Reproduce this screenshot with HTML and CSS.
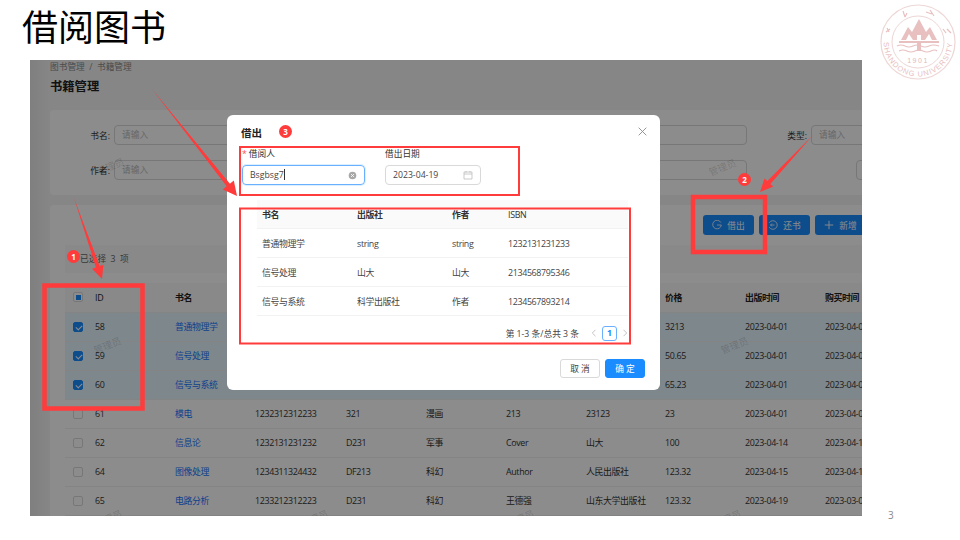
FILE: index.html
```html
<!DOCTYPE html>
<html>
<head>
    <meta charset="utf-8">
    <title>借阅图书</title>
    <link rel="stylesheet" href="styles.css">
</head>
<body>
<div class="slide">
    <div class="slideHead">
        <h1>借阅图书</h1>
    </div>
    <svg class="logo" width="80" height="80" viewBox="0 0 80 80">
        <defs>
            <path id="logoArc" d="M3.500 40 A34.500 34.500 0 0 0 72.500 40"/>
        </defs>
        <circle cx="38" cy="40" r="37" fill="none" stroke="#eed6d6" stroke-width="1.200"/>
        <circle cx="38" cy="40" r="26" fill="none" stroke="#eed6d6" stroke-width="1"/>
        <path d="M21 38 L28 25 L32 30 L39 17 L46 30 L50 25 L57 38 L52 38 L49 32 L45 38 L41 38 L41 33 L37 33 L37 38 L33 38 L29 32 L26 38 Z" fill="#e8c0c0"/>
        <path d="M19 39 H59 V41 H19 Z M37 39 H41 V49 H37 Z" fill="#e8c0c0"/>
        <path d="M17 44 Q21 42 25 44 T33 44 T41 44 T49 44 T59 44 M19 49 Q23 47 27 49 T35 49 T43 49 T51 49 T57 49" fill="none" stroke="#e8c0c0" stroke-width="1.100"/>
        <text x="38" y="61" class="logoYear" text-anchor="middle">1901</text>
        <text class="logoName"><textPath href="#logoArc" startOffset="50%" text-anchor="middle">SHANDONG UNIVERSITY</textPath></text>
        <path d="M6 30 L10 27 M7 26 L9 30 M23 9 L25 15 M27 11 L25 15 M46 10 L52 12 M50 8 L54 14 M63 27 L66 31 M67 27 L71 31" stroke="#e8c0c0" stroke-width="1.200" fill="none"/>
    </svg>

    <div class="shot">
        <div class="crumb">图书管理&nbsp; /&nbsp; 书籍管理</div>
        <div class="pageTitle">书籍管理</div>

        <div class="card searchCard">
            <div class="searchRow">
                <label class="searchLabel">书名:</label>
                <span class="searchInput">请输入</span>
                <span class="searchInput gapA">请输入</span>
                <label class="searchLabel labelType">类型:</label>
                <span class="searchInput">请输入</span>
            </div>
            <div class="searchRow">
                <label class="searchLabel">作者:</label>
                <span class="searchInput">请输入</span>
                <span class="searchInput gapA">请输入</span>
                <span class="searchInput gapB">请输入</span>
            </div>
        </div>

        <div class="card tableCard">
            <div class="toolbar">
                <button class="primaryBtn">
                    <svg width="10" height="10" viewBox="0 0 10 10"><path d="M8.800 2.500 A4.300 4.300 0 1 0 9.300 5 H5" fill="none" stroke="currentColor" stroke-width=".8"/></svg>
                    借出
                </button>
                <button class="primaryBtn">
                    <svg width="10" height="10" viewBox="0 0 10 10"><path d="M1.200 2.800 A4.300 4.300 0 1 1 1.200 7.200 M6.500 5 H2.500 M4 3.500 L2.500 5 L4 6.500" fill="none" stroke="currentColor" stroke-width=".8"/></svg>
                    还书
                </button>
                <button class="primaryBtn">
                    <svg width="10" height="10" viewBox="0 0 10 10"><path d="M5 .8 V9.200 M.8 5 H9.200" fill="none" stroke="currentColor" stroke-width=".9"/></svg>
                    新增
                </button>
            </div>
            <div class="alertBar">已选择&nbsp; 3&nbsp; 项</div>
            <table class="bookTable">
                <colgroup>
                    <col class="colCheck"><col class="colW"><col class="colW"><col class="colIsbn"><col class="colW"><col class="colW"><col class="colW"><col class="colPrice"><col class="colW"><col class="colW"><col class="colW">
                </colgroup>
                <thead>
                    <tr><th><i class="check half"></i></th><th class="latin">ID</th><th>书名</th><th class="latin">ISBN</th><th>编号</th><th>类型</th><th>作者</th><th>出版社</th><th>价格</th><th>出版时间</th><th>购买时间</th></tr>
                </thead>
                <tbody>
                    <tr class="selected"><td><i class="check on"></i></td><td>58</td><td><a>普通物理学</a></td><td>1232131231233</td><td>string</td><td>科幻</td><td>string</td><td>string</td><td>3213</td><td>2023-04-01</td><td>2023-04-01</td></tr>
                    <tr class="selected"><td><i class="check on"></i></td><td>59</td><td><a>信号处理</a></td><td>2134568795346</td><td>山大</td><td>科幻</td><td>山大</td><td>山大</td><td>50.65</td><td>2023-04-01</td><td>2023-04-01</td></tr>
                    <tr class="selected"><td><i class="check on"></i></td><td>60</td><td><a>信号与系统</a></td><td>1234567893214</td><td>科学</td><td>科幻</td><td>作者</td><td>科学出版社</td><td>65.23</td><td>2023-04-01</td><td>2023-04-01</td></tr>
                    <tr><td><i class="check"></i></td><td>61</td><td><a>模电</a></td><td>1232312312233</td><td>321</td><td>漫画</td><td>213</td><td>23123</td><td>23</td><td>2023-04-01</td><td>2023-04-01</td></tr>
                    <tr><td><i class="check"></i></td><td>62</td><td><a>信息论</a></td><td>1232131231232</td><td>D231</td><td>军事</td><td>Cover</td><td>山大</td><td>100</td><td>2023-04-14</td><td>2023-04-14</td></tr>
                    <tr><td><i class="check"></i></td><td>64</td><td><a>图像处理</a></td><td>1234311324432</td><td>DF213</td><td>科幻</td><td>Author</td><td>人民出版社</td><td>123.32</td><td>2023-04-15</td><td>2023-04-15</td></tr>
                    <tr><td><i class="check"></i></td><td>65</td><td><a>电路分析</a></td><td>1233212312223</td><td>D231</td><td>科幻</td><td>王德强</td><td>山东大学出版社</td><td>123.32</td><td>2023-04-19</td><td>2023-03-01</td></tr>
                </tbody>
            </table>
        </div>

        <span class="mark mark1">管理员</span>
        <span class="mark mark3">管理员</span>
        <span class="mark mark4">管理员</span>
        <span class="mark mark5">管理员</span>
        <span class="mark mark6">管理员</span>
        <span class="mark mark7">管理员</span>
        <span class="mark mark8">管理员</span>
        <span class="mark mark9">管理员</span>

        <div class="mask"></div>

        <div class="modal">
            <div class="modalTitle">借出</div>
            <svg class="modalClose" width="9" height="9" viewBox="0 0 9 9"><path d="M.7 .7 L8.300 8.300 M8.300 .7 L.7 8.300" stroke="#8a8a8a" stroke-width=".9"/></svg>
            <div class="modalForm">
                <div class="field fieldName">
                    <div class="fieldLabel"><em>*</em>借阅人</div>
                    <div class="fieldBox focus">
                        <span>Bsgbsg7<b class="caret"></b></span>
                        <svg width="9" height="9" viewBox="0 0 9 9"><circle cx="4.500" cy="4.500" r="3.800" fill="#a8a8a8"/><path d="M3 3 L6 6 M6 3 L3 6" stroke="#fff" stroke-width=".8"/></svg>
                    </div>
                </div>
                <div class="field fieldDate">
                    <div class="fieldLabel">借出日期</div>
                    <div class="fieldBox">
                        <span>2023-04-19</span>
                        <svg width="10" height="10" viewBox="0 0 10 10"><path d="M1 2 H9 V9 H1 Z M1 4 H9 M3 1 V2.500 M7 1 V2.500" fill="none" stroke="#b5b5b5" stroke-width=".7"/></svg>
                    </div>
                </div>
            </div>
            <table class="pickTable">
                <colgroup>
                    <col class="pickName"><col class="pickName"><col class="pickAuthor"><col>
                </colgroup>
                <thead>
                    <tr><th>书名</th><th>出版社</th><th>作者</th><th class="latin">ISBN</th></tr>
                </thead>
                <tbody>
                    <tr><td>普通物理学</td><td>string</td><td>string</td><td>1232131231233</td></tr>
                    <tr><td>信号处理</td><td>山大</td><td>山大</td><td>2134568795346</td></tr>
                    <tr><td>信号与系统</td><td>科学出版社</td><td>作者</td><td>1234567893214</td></tr>
                </tbody>
            </table>
            <div class="pager">
                <span class="pagerTotal">第 1-3 条/总共 3 条</span>
                <svg width="6" height="8" viewBox="0 0 6 8"><path d="M4.500 .8 L1.300 4 L4.500 7.200" fill="none" stroke="#c4c4c4"/></svg>
                <span class="pagerCur">1</span>
                <svg width="6" height="8" viewBox="0 0 6 8"><path d="M1.500 .8 L4.700 4 L1.500 7.200" fill="none" stroke="#c4c4c4"/></svg>
            </div>
            <div class="modalFoot">
                <button class="footBtn">取 消</button>
                <button class="footBtn ok">确 定</button>
            </div>
        </div>
    </div>

    <svg class="notes" width="960" height="540" viewBox="0 0 960 540">
        <g fill="none" stroke="#ff3b3b">
            <rect x="240" y="147" width="279" height="48" stroke-width="2"/>
            <rect x="240" y="208.500" width="390" height="135" stroke-width="2"/>
            <rect x="44.500" y="285.500" width="98" height="123" stroke-width="4.500"/>
            <rect x="693" y="197" width="72" height="55" stroke-width="4.500"/>
        </g>
        <g fill="#ff3b3b">
            <polygon points="74,198 99.600,266 103.400,264.700 102,279 92.100,268.700 95.900,267.400"/>
            <polygon points="152,89 229.900,183.800 233.800,180.600 237,196 222.800,189.400 226.700,186.200"/>
            <polygon points="813,135 770.400,183.900 773.300,186.600 760,192 764.500,178.400 767.400,181.100"/>
        </g>
    </svg>
    <span class="badge badge1">1</span>
    <span class="badge badge2">2</span>
    <span class="badge badge3">3</span>

    <span class="pageNo">3</span>
</div>
</body>
</html>
```

FILE: styles.css
```css
*{
    box-sizing: border-box;
}
body{
    margin: 0;
    background: #fff;
    font-family: "Open Sans", "Noto Sans CJK SC", sans-serif;
}
.slide{
    width: 960px;
    height: 540px;
    position: relative;
    overflow: hidden;
}
.slideHead{
    height: 60px;
    padding-left: 22px;
}
.slideHead h1{
    margin: 0;
    font-family: "Noto Sans CJK SC", sans-serif;
    font-size: 36px;
    font-weight: 400;
    line-height: 50px;
    color: #000;
}
.logo{
    position: absolute;
    left: 880px;
    top: 2px;
}
.logoYear{
    font: 7px "Liberation Sans", sans-serif;
    letter-spacing: 1.5px;
    fill: #e0baba;
}
.logoName{
    font: 7.500px "Liberation Sans", sans-serif;
    letter-spacing: .9px;
    fill: #e8c0c0;
}

/* the dimmed page */
.shot{
    width: 832px;
    height: 456px;
    margin-left: 30px;
    padding-left: 20px;
    position: relative;
    overflow: hidden;
    background: linear-gradient(90deg, #e8e8e8, #f5f5f5 20px);
    color: #333;
    font-size: 8.700px;
}
.crumb{
    height: 14px;
    line-height: 14px;
    color: #888;
}
.pageTitle{
    margin-top: 5px;
    height: 16px;
    line-height: 16px;
    font-size: 12.300px;
    font-weight: 700;
    color: #222;
}
.card{
    width: 1000px;
    background: #fff;
    border-radius: 4px;
}
.searchCard{
    height: 85px;
    margin-top: 15px;
    padding-top: 15px;
}
.searchRow{
    display: flex;
    align-items: center;
    height: 20px;
    margin-bottom: 15px;
}
.searchLabel{
    flex: none;
    width: 60px;
    text-align: right;
    color: #333;
}
.searchInput{
    flex: none;
    width: 300px;
    height: 20px;
    margin-left: 4px;
    padding-left: 7px;
    line-height: 18px;
    border: 1px solid #d9d9d9;
    border-radius: 4px;
    color: #bbb;
}
.gapA{
    margin-left: 33px;
}
.gapB{
    margin-left: 109px;
}
.labelType{
    width: 60px;
}
.tableCard{
    margin-top: 10px;
    padding: 10px 0 0 15px;
    height: 320px;
}
.toolbar{
    width: 801px;
    display: flex;
    justify-content: flex-end;
    gap: 5px;
}
.primaryBtn{
    width: 51px;
    height: 20px;
    padding: 0;
    display: flex;
    align-items: center;
    justify-content: center;
    gap: 5px;
    border: 0;
    border-radius: 3px;
    background: #1a8cff;
    color: #fff;
    font: inherit;
}
.alertBar{
    width: 812px;
    height: 28px;
    margin: 10px 0;
    padding-left: 15px;
    line-height: 28px;
    background: #fafafa;
    color: #666;
}
.bookTable{
    width: 840px;
    table-layout: fixed;
    border-collapse: collapse;
    font-size: 8.900px;
    letter-spacing: -.35px;
}
.colCheck{
    width: 30px;
}
.colW{
    width: 80px;
}
.colIsbn{
    width: 91px;
}
.colPrice{
    width: 79px;
}
.bookTable th,
.bookTable td{
    height: 29px;
    padding: 0;
    text-align: left;
    white-space: nowrap;
    overflow: hidden;
    border-bottom: 1px solid #f0f0f0;
}
.bookTable th{
    background: #fafafa;
    font-weight: 600;
    color: #222;
}
.bookTable th.latin,
.pickTable th.latin{
    font-weight: 400;
}
.bookTable td:first-child,
.bookTable th:first-child{
    padding-left: 8px;
}
.bookTable a{
    color: #1677ff;
}
.selected td{
    background: #e6f6ff;
}
.check{
    display: block;
    width: 10px;
    height: 10px;
    position: relative;
    background: #fff;
    border: 1px solid #d9d9d9;
    border-radius: 2px;
}
.check.on{
    background: #1a8cff;
    border-color: #1a8cff;
}
.check.on:after{
    content: "";
    position: absolute;
    left: 2.500px;
    top: 1px;
    width: 3px;
    height: 5px;
    border: solid #fff;
    border-width: 0 1px 1px 0;
    transform: rotate(45deg);
}
.check.half:after{
    content: "";
    position: absolute;
    left: 1.500px;
    top: 1.500px;
    width: 5px;
    height: 5px;
    background: #1a8cff;
}
.mark{
    position: absolute;
    font-size: 9.500px;
    color: rgba(0, 0, 0, .16);
    transform: rotate(-22deg);
}
.mark1{ left: 66px; top: 99px; }
.mark3{ left: 678px; top: 100px; }
.mark4{ left: 63px; top: 278px; }
.mark5{ left: 690px; top: 278px; }
.mark6{ left: 64px; top: 451px; }
.mark7{ left: 270px; top: 451px; }
.mark8{ left: 476px; top: 451px; }
.mark9{ left: 683px; top: 451px; }
.mask{
    position: absolute;
    top: 0;
    left: 0;
    right: 0;
    bottom: 0;
    background: rgba(0, 0, 0, .45);
}

/* modal */
.modal{
    position: absolute;
    left: 197px;
    top: 55px;
    width: 433px;
    padding: 11px 0 12px;
    background: #fff;
    border-radius: 6px;
    color: #444;
}
.modalTitle{
    padding-left: 14px;
    height: 14px;
    line-height: 14px;
    font-size: 10.500px;
    font-weight: 700;
    color: #222;
}
.modalClose{
    position: absolute;
    top: 12px;
    right: 13px;
}
.modalForm{
    display: flex;
    gap: 20px;
    margin-top: 7px;
    padding-left: 15px;
}
.fieldName{
    width: 123px;
}
.fieldDate{
    width: 96px;
}
.fieldLabel{
    height: 14px;
    line-height: 14px;
    color: #333;
}
.fieldLabel em{
    font-style: normal;
    color: #ff4d4f;
    margin-right: 2px;
}
.fieldBox{
    height: 20px;
    margin-top: 4px;
    padding: 0 7px;
    display: flex;
    align-items: center;
    justify-content: space-between;
    border: 1px solid #d9d9d9;
    border-radius: 4px;
    color: #444;
}
.fieldBox.focus{
    border-color: #69b1ff;
    box-shadow: 0 0 0 1px #dcefff;
}
.caret{
    display: inline-block;
    width: 1px;
    height: 11px;
    background: #333;
    vertical-align: -2px;
}
.pickTable{
    width: 371px;
    margin: 15px 0 0 30px;
    table-layout: fixed;
    border-collapse: collapse;
    font-size: 8.900px;
    letter-spacing: -.35px;
}
.pickName{
    width: 95px;
}
.pickAuthor{
    width: 56px;
}
.pickTable th,
.pickTable td{
    height: 29px;
    padding: 1px 0 0 5px;
    text-align: left;
    border-bottom: 1px solid #f2f2f2;
}
.pickTable th{
    height: 28px;
    background: #fafafa;
    font-weight: 600;
    color: #333;
}
.pager{
    height: 15px;
    margin: 10px 32px 0 0;
    display: flex;
    justify-content: flex-end;
    align-items: center;
    gap: 5px;
}
.pagerTotal{
    margin-right: 7px;
}
.pagerCur{
    width: 15px;
    height: 15px;
    line-height: 13px;
    text-align: center;
    border: 1px solid #69b1ff;
    border-radius: 3px;
    color: #1a8cff;
    font-weight: 700;
}
.modalFoot{
    margin-top: 18px;
    padding-right: 15px;
    display: flex;
    justify-content: flex-end;
    gap: 5px;
}
.footBtn{
    width: 40px;
    height: 19px;
    padding: 0;
    border: 1px solid #d9d9d9;
    border-radius: 3px;
    background: #fff;
    color: #444;
    font: inherit;
}
.footBtn.ok{
    border-color: #1a8cff;
    background: #1a8cff;
    color: #fff;
}

/* red notes drawn over the slide */
.notes{
    position: absolute;
    top: 0;
    left: 0;
}
.badge{
    position: absolute;
    width: 13px;
    height: 13px;
    line-height: 13px;
    text-align: center;
    border-radius: 50%;
    background: #ff3b3b;
    color: #fff;
    font-size: 8px;
    font-weight: 700;
}
.badge1{ left: 67px; top: 250px; }
.badge2{ left: 738px; top: 173px; }
.badge3{ left: 279px; top: 125px; }
.pageNo{
    position: absolute;
    left: 888px;
    top: 508px;
    font-size: 10px;
    color: #8a8a8a;
}
```
